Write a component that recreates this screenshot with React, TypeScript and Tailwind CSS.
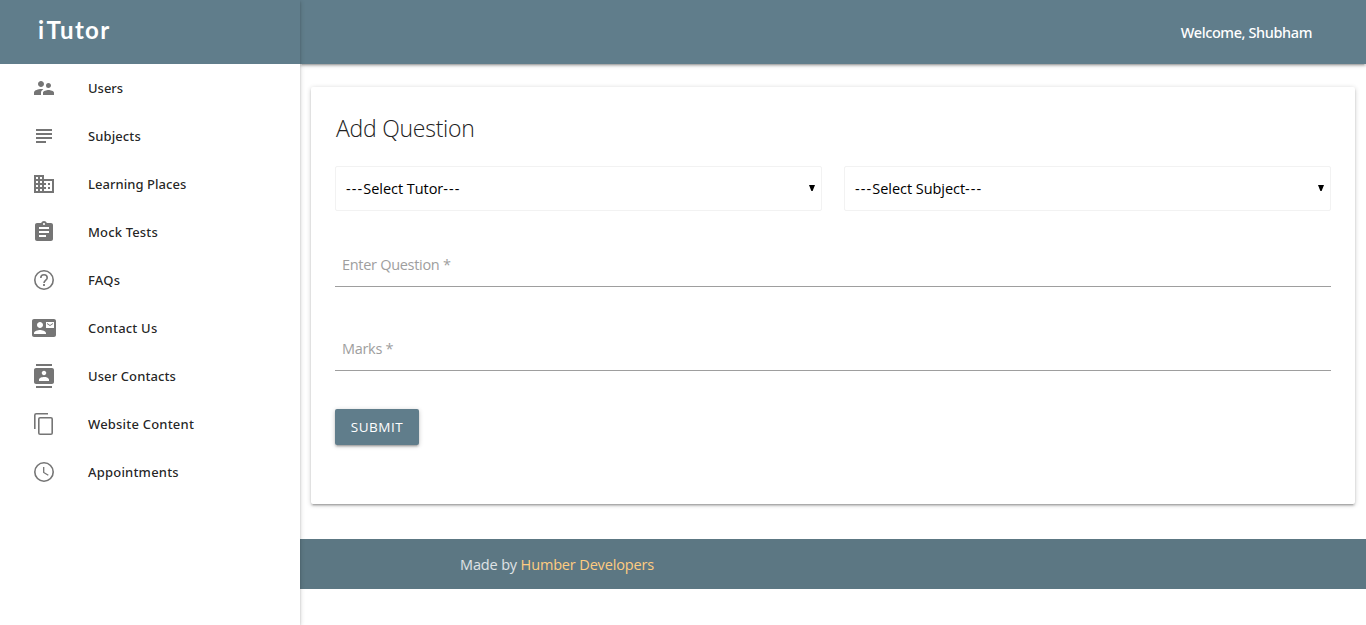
import type { ComponentType, ReactNode } from "react";
import {
  MdSupervisorAccount,
  MdSubject,
  MdDomain,
  MdAssignment,
  MdContactMail,
  MdContacts,
} from "react-icons/md";

type IconProps = { size?: number; className?: string };

const depth =
  "shadow-[0_2px_2px_0_rgba(0,0,0,0.14),0_3px_1px_-2px_rgba(0,0,0,0.12),0_1px_5px_0_rgba(0,0,0,0.2)]";

function HelpIcon({ size = 24, className }: IconProps) {
  return (
    <svg width={size} height={size} viewBox="0 0 24 24" fill="none" stroke="currentColor" strokeWidth="1.6" className={className}>
      <circle cx="12" cy="12" r="9.2" />
      <path d="M8.8 10a3.2 3.2 0 0 1 6.4 0c0 2-3.2 2.3-3.2 5" />
      <path d="M11.1 17h1.8" strokeWidth="2" />
    </svg>
  );
}

function CopyIcon({ size = 24, className }: IconProps) {
  return (
    <svg width={size} height={size} viewBox="0 0 24 24" fill="none" stroke="currentColor" strokeWidth="1.6" className={className}>
      <path d="M2.8 17V3.3c0-.9.6-1.5 1.5-1.5H16" />
      <rect x="6.8" y="5.8" width="13.4" height="16.4" rx="1.3" />
    </svg>
  );
}

function ClockIcon({ size = 24, className }: IconProps) {
  return (
    <svg width={size} height={size} viewBox="0 0 24 24" fill="none" stroke="currentColor" strokeWidth="1.6" className={className}>
      <circle cx="12" cy="12" r="9.2" />
      <path d="M11.7 7v5.5l4.6 2.8" strokeWidth="1.3" />
    </svg>
  );
}

const links: { label: string; icon: ComponentType<IconProps>; spacing: string }[] = [
  { label: "Users", icon: MdSupervisorAccount, spacing: "tracking-[0px]" },
  { label: "Subjects", icon: MdSubject, spacing: "tracking-[0.1px]" },
  { label: "Learning Places", icon: MdDomain, spacing: "tracking-[0.05px]" },
  { label: "Mock Tests", icon: MdAssignment, spacing: "tracking-[0.15px]" },
  { label: "FAQs", icon: HelpIcon, spacing: "tracking-[0.2px]" },
  { label: "Contact Us", icon: MdContactMail, spacing: "tracking-[0.2px]" },
  { label: "User Contacts", icon: MdContacts, spacing: "tracking-[0.1px]" },
  { label: "Website Content", icon: CopyIcon, spacing: "tracking-[0.2px]" },
  { label: "Appointments", icon: ClockIcon, spacing: "tracking-[0.2px]" },
];

function Select({ children }: { children: ReactNode }) {
  return (
    <div className="flex h-[45px] flex-1 items-center justify-between rounded-[2px] border border-[#f2f2f2] bg-white/90 pr-[6px] pl-[10px] text-[14.5px] tracking-[-0.05px] text-black">
      {children}
      <svg width="6" height="6" viewBox="0 0 6 6" className="-mt-[2px]">
        <path d="M0 0h6L3.6 6H2.4z" fill="#000" />
      </svg>
    </div>
  );
}

function Dashes() {
  return <span className="tracking-[1.1px]">---</span>;
}

function Field({ children }: { children: ReactNode }) {
  return (
    <div className="flex h-[45px] items-center border-b border-[#9e9e9e] pt-[2px] pl-[7px] text-[14.5px] tracking-[-0.3px] text-[#9e9e9e]">
      {children}
    </div>
  );
}

export default function App() {
  return (
    <div className="flex h-[625px] w-full overflow-hidden bg-white font-['Open_Sans','Noto_Sans',sans-serif] text-[15px]">
      <aside className={`z-10 w-[300px] shrink-0 bg-white ${depth}`}>
        <div className="flex h-16 items-start bg-[#607d8b] pt-[12px] pl-[38px] font-['Lato',sans-serif] text-[24px] leading-9 font-bold text-white">
          <span>
            <span className="tracking-[2.5px]">i</span>
            <span className="tracking-[1.3px]">Tutor</span>
          </span>
        </div>
        <nav>
          {links.map(({ label, icon: Icon, spacing }) => (
            <a key={label} className="flex h-12 items-center pl-8 font-['Noto_Sans',sans-serif] text-[13px] font-medium text-black/87">
              <Icon size={24} className="mr-8 shrink-0 text-[#757575]" />
              <span className={`pt-[2px] ${spacing}`}>{label}</span>
            </a>
          ))}
        </nav>
      </aside>

      <div className="flex min-w-0 flex-1 flex-col">
        <header className={`flex h-16 shrink-0 items-center justify-end bg-[#607d8b] pt-[2px] pr-[54px] ${depth}`}>
          <span className="font-['Noto_Sans',sans-serif] text-[14.5px] font-medium tracking-[-0.4px] text-white">Welcome, Shubham</span>
        </header>

        <main className={`mx-[11px] mt-[23px] h-[417px] shrink-0 rounded-[2px] bg-white px-6 ${depth}`}>
          <h1 className="pt-[21px] pb-px pl-px text-[23px] leading-[40px] font-light tracking-[-0.25px] text-[#222]">Add Question</h1>
          <div className="mt-[17px] flex gap-[22px]">
            <Select>
              <span>
                <Dashes />
                Select Tutor
                <Dashes />
              </span>
            </Select>
            <Select>
              <span>
                <Dashes />
                Select Subject
                <Dashes />
              </span>
            </Select>
          </div>
          <div className="mt-[31px] flex flex-col gap-[39px]">
            <Field>Enter Question *</Field>
            <Field>Marks *</Field>
          </div>
          <button
            className={`mt-[38px] flex h-9 w-[84px] items-center justify-center rounded-[2px] bg-[#607d8b] text-[13.5px] tracking-[0.5px] text-white ${depth}`}
          >
            SUBMIT
          </button>
        </main>

        <footer className="mt-[35px] flex h-[50px] shrink-0 items-center bg-[#5c7783] pt-[2px] pl-[160px] text-[14.5px] tracking-[-0.15px] text-white/80">
          <p>
            Made by <a className="text-[#ffcc80]">Humber Developers</a>
          </p>
        </footer>
      </div>
    </div>
  );
}
